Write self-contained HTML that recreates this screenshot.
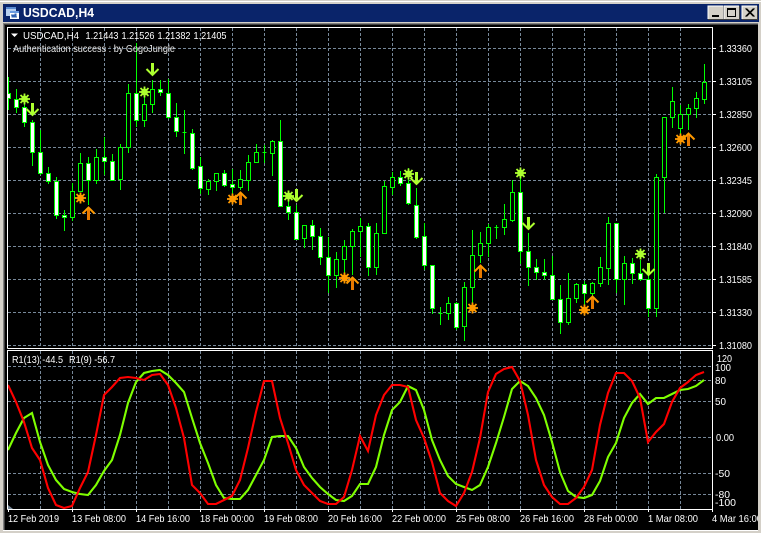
<!DOCTYPE html>
<html>
<head>
<meta charset="utf-8">
<style>
html,body{margin:0;padding:0;background:#d4d0c8;}
svg{display:block;}
text{font-family:"Liberation Sans",sans-serif;font-size:10.5px;fill:#fff;}
</style>
</head>
<body>
<svg width="761" height="533" viewBox="0 0 761 533" xmlns="http://www.w3.org/2000/svg" shape-rendering="crispEdges">
<defs>
<clipPath id="main"><rect x="8" y="28" width="704" height="320"/></clipPath>
<clipPath id="sub"><rect x="8" y="351" width="704" height="158"/></clipPath>
<g id="star" shape-rendering="auto"><path d="M-5.5 0H5.5M0-5.5V5.5M-4-4L4 4M-4 4L4-4" stroke-width="1.8" stroke="currentColor" fill="none"/><circle r="3.4" fill="currentColor"/></g>
<g id="dn" shape-rendering="auto"><path d="M0 0V11" stroke-width="3" stroke="currentColor" fill="none"/><path d="M-6 6L0 12L6 6" stroke-width="2" stroke="currentColor" fill="none"/></g>
<g id="up" shape-rendering="auto"><path d="M0 13V2" stroke-width="3" stroke="#e87a00" fill="none"/><path d="M-6 6.5L0 .5L6 6.5" stroke-width="2" stroke="#ff9900" fill="none"/></g>
</defs>

<!-- window frame -->
<rect width="761" height="533" fill="#d4d0c8"/>
<rect x="0" y="1" width="761" height="1" fill="#ffffff"/>
<rect x="3" y="4" width="756" height="18" fill="#0a246a"/>
<rect x="3" y="22" width="755" height="1" fill="#d4d0c8"/>
<rect x="3" y="23" width="755" height="1" fill="#808080"/>
<rect x="4" y="24" width="754" height="1" fill="#404040"/>
<rect x="3" y="23" width="1" height="508" fill="#808080"/>
<rect x="4" y="24" width="1" height="506" fill="#404040"/>
<rect x="5" y="25" width="753" height="505" fill="#000"/>
<rect x="3" y="530" width="755" height="1" fill="#ffffff"/>

<!-- title icon -->
<g>
<rect x="6" y="7" width="10" height="9" fill="#b8d0f0"/>
<rect x="6" y="7" width="10" height="2" fill="#5a8ad0"/>
<rect x="10" y="11" width="9" height="8" fill="#fff"/>
<rect x="10" y="11" width="9" height="2" fill="#6a9ae0"/>
<path d="M11 15h1v2h1v-2h1v2h1v-3h1v3h1" stroke="#3060b0" fill="none"/>
</g>
<text x="23" y="17" textLength="71" lengthAdjust="spacingAndGlyphs" style="font-size:13px;font-weight:bold">USDCAD,H4</text>

<!-- buttons -->
<g>
<rect x="708" y="6" width="15" height="13" fill="#d4d0c8"/>
<path d="M708 19V6H723" stroke="#fff" fill="none"/>
<path d="M723.5 6V19.5H708" stroke="#404040" fill="none"/>
<rect x="712" y="15" width="7" height="2" fill="#000"/>
<rect x="724" y="6" width="15" height="13" fill="#d4d0c8"/>
<path d="M724 19V6H739" stroke="#fff" fill="none"/>
<path d="M739.5 6V19.5H724" stroke="#404040" fill="none"/>
<rect x="727.5" y="8.5" width="8" height="8" fill="none" stroke="#000"/>
<rect x="727" y="8" width="9" height="2" fill="#000"/>
<rect x="742" y="6" width="15" height="13" fill="#d4d0c8"/>
<path d="M742 19V6H757" stroke="#fff" fill="none"/>
<path d="M757.5 6V19.5H742" stroke="#404040" fill="none"/>
<path d="M745.5 8.5L753.5 16.5M746.5 8.5L754.5 16.5M753.5 8.5L745.5 16.5M754.5 8.5L746.5 16.5" stroke="#000" fill="none" shape-rendering="auto" stroke-width="1"/>
</g>

<!-- grid -->
<path d="M8 48.5H712M8 81.5H712M8 114.5H712M8 147.5H712M8 180.5H712M8 213.5H712M8 246.5H712M8 279.5H712M8 312.5H712M8 345.5H712
M8 366.5H712M8 380.5H712M8 401.5H712M8 437.5H712M8 473.5H712M8 494.5H712" stroke="#778899" stroke-dasharray="3 2" fill="none"/>
<path d="M40.5 28V348M72.5 28V348M104.5 28V348M136.5 28V348M168.5 28V348M200.5 28V348M232.5 28V348M264.5 28V348M296.5 28V348M328.5 28V348M360.5 28V348M392.5 28V348M424.5 28V348M456.5 28V348M488.5 28V348M520.5 28V348M552.5 28V348M584.5 28V348M616.5 28V348M648.5 28V348M680.5 28V348
M40.5 351V509M72.5 351V509M104.5 351V509M136.5 351V509M168.5 351V509M200.5 351V509M232.5 351V509M264.5 351V509M296.5 351V509M328.5 351V509M360.5 351V509M392.5 351V509M424.5 351V509M456.5 351V509M488.5 351V509M520.5 351V509M552.5 351V509M584.5 351V509M616.5 351V509M648.5 351V509M680.5 351V509" stroke="#778899" stroke-dasharray="3 2" fill="none"/>

<!-- candles -->
<g clip-path="url(#main)">
<path stroke="#00ff00" fill="none" d="M8.5 77V110M16.5 89V113M24.5 100V127M32.5 120V166M40.5 130V175M48.5 167V184M56.5 177V219M64.5 210V231M72.5 183V221M80.5 153V192M88.5 157V205M96.5 149V184M104.5 137V175M112.5 154V181M120.5 144V190M128.5 84V153M136.5 43V127M144.5 87V127M152.5 80V113M160.5 80V96M168.5 79V119M176.5 103V137M184.5 110V154M192.5 129V170M200.5 157V194M208.5 179V195M216.5 173V191M224.5 170V187M232.5 169V195M240.5 170V190M248.5 155V191M256.5 144V163M264.5 145V163M272.5 140V176M280.5 120V207M288.5 201V220M296.5 205V240M304.5 225V248M312.5 220V250M320.5 228V265M328.5 237V293M336.5 252V288M344.5 240V275M352.5 229V275M360.5 218V257M368.5 223V276M376.5 223V275M384.5 181V234M392.5 172V195M400.5 171V186M408.5 168V205M416.5 188V239M424.5 223V270M432.5 265V314M440.5 307V325M448.5 297V320M456.5 302V330M464.5 282V341M472.5 230V308M480.5 232V263M488.5 224V257M496.5 225V239M504.5 204V235M512.5 180V222M520.5 178V264M528.5 233V286M536.5 259V280M544.5 259V280M552.5 256V300M560.5 285V334M568.5 273V325M576.5 283V303M584.5 281V315M592.5 282V296M600.5 257V287M608.5 217V285M616.5 223V293M624.5 256V305M632.5 258V284M640.5 260V281M648.5 263V317M656.5 174V317M664.5 117V213M672.5 87V128M680.5 105V135M688.5 104V130M696.5 92V118M704.5 64V104"/>
<path stroke="#00ff00" fill="#fff" d="M6.5 93.5h4V98.5h-4zM14.5 99.5h4V107.5h-4zM22.5 107.5h4V122.5h-4zM30.5 122.5h4V152.5h-4zM38.5 152.5h4V173.5h-4zM46.5 173.5h4V181.5h-4zM54.5 181.5h4V215.5h-4zM62.5 215.5h4V217.5h-4zM86.5 163.5h4V180.5h-4zM102.5 157.5h4V161.5h-4zM110.5 161.5h4V180.5h-4zM134.5 93.5h4V120.5h-4zM158.5 89.5h4V92.5h-4zM166.5 93.5h4V117.5h-4zM174.5 117.5h4V131.5h-4zM182.5 132.5h4M190.5 133.5h4V168.5h-4zM198.5 166.5h4V188.5h-4zM222.5 173.5h4V185.5h-4zM230.5 184.5h4V187.5h-4zM262.5 152.5h4M278.5 141.5h4V206.5h-4zM286.5 206.5h4V212.5h-4zM294.5 212.5h4V239.5h-4zM310.5 225.5h4V236.5h-4zM318.5 236.5h4V257.5h-4zM326.5 257.5h4V275.5h-4zM366.5 226.5h4V267.5h-4zM398.5 177.5h4V183.5h-4zM406.5 183.5h4V203.5h-4zM414.5 205.5h4V237.5h-4zM422.5 236.5h4V265.5h-4zM430.5 265.5h4V308.5h-4zM454.5 303.5h4V327.5h-4zM518.5 192.5h4V251.5h-4zM526.5 251.5h4V267.5h-4zM534.5 267.5h4V272.5h-4zM542.5 272.5h4V275.5h-4zM550.5 275.5h4V299.5h-4zM558.5 299.5h4V322.5h-4zM582.5 284.5h4V293.5h-4zM614.5 223.5h4V279.5h-4zM630.5 263.5h4V273.5h-4zM638.5 273.5h4V279.5h-4zM646.5 279.5h4V308.5h-4z"/>
<path stroke="#00ff00" fill="#000" d="M70.5 191.5h4V217.5h-4zM78.5 163.5h4V191.5h-4zM94.5 157.5h4V180.5h-4zM118.5 147.5h4V179.5h-4zM126.5 93.5h4V147.5h-4zM142.5 104.5h4V120.5h-4zM150.5 89.5h4V104.5h-4zM206.5 181.5h4V189.5h-4zM214.5 173.5h4V181.5h-4zM238.5 179.5h4V187.5h-4zM246.5 162.5h4V180.5h-4zM254.5 152.5h4V162.5h-4zM270.5 141.5h4V153.5h-4zM302.5 225.5h4V238.5h-4zM334.5 259.5h4V275.5h-4zM342.5 246.5h4V259.5h-4zM350.5 231.5h4V246.5h-4zM358.5 226.5h4V231.5h-4zM374.5 233.5h4V267.5h-4zM382.5 186.5h4V233.5h-4zM390.5 177.5h4V187.5h-4zM438.5 313.5h4M446.5 303.5h4V313.5h-4zM462.5 287.5h4V326.5h-4zM470.5 255.5h4V287.5h-4zM478.5 243.5h4V255.5h-4zM486.5 227.5h4V243.5h-4zM494.5 227.5h4M502.5 219.5h4V227.5h-4zM510.5 192.5h4V220.5h-4zM566.5 298.5h4V322.5h-4zM574.5 284.5h4V298.5h-4zM590.5 283.5h4V293.5h-4zM598.5 267.5h4V283.5h-4zM606.5 223.5h4V268.5h-4zM622.5 263.5h4V279.5h-4zM654.5 177.5h4V308.5h-4zM662.5 117.5h4V177.5h-4zM670.5 101.5h4V117.5h-4zM678.5 114.5h4V128.5h-4zM686.5 108.5h4V114.5h-4zM694.5 98.5h4V108.5h-4zM702.5 82.5h4V99.5h-4z"/>

<!-- signals -->
<g color="#adff2f">
<use href="#star" x="24.5" y="99"/>
<use href="#star" x="144.5" y="92"/>
<use href="#star" x="288.5" y="196"/>
<use href="#star" x="408.5" y="174"/>
<use href="#star" x="520.5" y="173"/>
<use href="#star" x="640.5" y="254"/>
<use href="#dn" x="32.5" y="103"/>
<use href="#dn" x="152.5" y="63"/>
<use href="#dn" x="296.5" y="189"/>
<use href="#dn" x="416.5" y="172"/>
<use href="#dn" x="528.5" y="217"/>
<use href="#dn" x="648.5" y="263"/>
</g>
<g color="#ff9900">
<use href="#star" x="80.5" y="198"/>
<use href="#star" x="232.5" y="199"/>
<use href="#star" x="344.5" y="278"/>
<use href="#star" x="472.5" y="308"/>
<use href="#star" x="584.5" y="310"/>
<use href="#star" x="680.5" y="139"/>
<use href="#up" x="88.5" y="207"/>
<use href="#up" x="240.5" y="192"/>
<use href="#up" x="352.5" y="277"/>
<use href="#up" x="480.5" y="265"/>
<use href="#up" x="592.5" y="296"/>
<use href="#up" x="688.5" y="133"/>
</g>
</g>

<!-- oscillator -->
<g clip-path="url(#sub)" shape-rendering="auto" fill="none" stroke-width="2.1">
<polyline stroke="#7fff00" points="8,450 16,433 24,418 32,413 40,442 48,465 56,480 64,489 72,492 80,494 88,495 96,485 104,471 112,460 120,435 128,403 136,382 144,373 152,371 160,370 168,375 176,383 184,392 192,418 200,443 208,463 216,485 224,498 232,499 240,499 248,490 256,475 264,460 272,437 280,436 288,436 296,448 304,467 312,478 320,487 328,494 336,500 344,501 352,496 360,484 368,484 376,467 384,435 392,410 400,402 408,386 416,390 424,410 432,440 440,460 448,476 456,484 464,487 472,490 480,485 488,467 496,443 504,417 512,389 520,381 528,386 536,398 544,415 552,442 560,472 568,491 576,497 584,498 592,495 600,481 608,457 616,443 624,418 632,403 640,394 648,404 656,398 664,398 672,394 680,390 688,389 696,386 704,380"/>
<polyline stroke="#ff0000" points="8,385 16,402 24,422 32,448 40,460 48,488 56,505 64,508 72,506 80,488 88,472 96,435 104,395 112,387 120,378 128,377 136,378 144,380 152,375 160,374 168,385 176,408 184,438 192,485 200,493 208,504 216,504 224,500 232,496 240,480 248,448 256,412 264,381 272,381 280,418 288,443 296,470 304,485 312,493 320,501 328,504 336,504 344,497 352,470 360,436 368,451 376,415 384,395 392,385 400,385 408,387 416,420 424,438 432,462 440,493 448,501 456,506 464,493 472,472 480,438 488,392 496,374 504,369 512,367 520,381 528,415 536,460 544,485 552,497 560,504 568,504 576,498 584,487 592,470 600,425 608,393 616,373 624,373 632,381 640,398 648,442 656,432 664,424 672,402 680,388 688,382 696,375 704,372"/>
</g>

<!-- pane borders -->
<path d="M7.5 348.5V27.5H712.5V348.5H7.5M7.5 509.5V350.5H712.5V509.5H7.5" stroke="#fff" fill="none"/>
<path d="M8 505L13 509H8z" fill="#778899" shape-rendering="auto"/>

<!-- ticks -->
<path stroke="#fff" fill="none" d="M8.5 510V512M72.5 510V512M136.5 510V512M200.5 510V512M264.5 510V512M328.5 510V512M392.5 510V512M456.5 510V512M520.5 510V512M584.5 510V512M648.5 510V512M712.5 510V512
M713 48.5H716M713 81.5H716M713 114.5H716M713 147.5H716M713 180.5H716M713 213.5H716M713 246.5H716M713 279.5H716M713 312.5H716M713 345.5H716"/>

<!-- chart header -->
<path d="M11 33.5H18L14.5 37z" fill="#fff" shape-rendering="auto"/>
<text x="23" y="39" textLength="56" lengthAdjust="spacingAndGlyphs">USDCAD,H4</text>
<text x="85.5" y="39" textLength="33" lengthAdjust="spacingAndGlyphs">1.21443</text>
<text x="121.5" y="39" textLength="33" lengthAdjust="spacingAndGlyphs">1.21526</text>
<text x="157.5" y="39" textLength="33" lengthAdjust="spacingAndGlyphs">1.21382</text>
<text x="193.5" y="39" textLength="33" lengthAdjust="spacingAndGlyphs">1.21405</text>
<text x="13" y="52" textLength="162" lengthAdjust="spacingAndGlyphs" style="fill:#e8e8e8">Authentication success : by GogoJungle</text>
<text x="12" y="363" textLength="51" lengthAdjust="spacingAndGlyphs">R1(13) -44.5</text>
<text x="69" y="363" textLength="46" lengthAdjust="spacingAndGlyphs">R1(9) -56.7</text>

<!-- price axis -->
<g>
<text x="719" y="52" textLength="33" lengthAdjust="spacingAndGlyphs">1.33360</text>
<text x="719" y="85" textLength="33" lengthAdjust="spacingAndGlyphs">1.33105</text>
<text x="719" y="118" textLength="33" lengthAdjust="spacingAndGlyphs">1.32850</text>
<text x="719" y="151" textLength="33" lengthAdjust="spacingAndGlyphs">1.32600</text>
<text x="719" y="184" textLength="33" lengthAdjust="spacingAndGlyphs">1.32345</text>
<text x="719" y="217" textLength="33" lengthAdjust="spacingAndGlyphs">1.32090</text>
<text x="719" y="250" textLength="33" lengthAdjust="spacingAndGlyphs">1.31840</text>
<text x="719" y="283" textLength="33" lengthAdjust="spacingAndGlyphs">1.31585</text>
<text x="719" y="316" textLength="33" lengthAdjust="spacingAndGlyphs">1.31330</text>
<text x="719" y="349" textLength="33" lengthAdjust="spacingAndGlyphs">1.31080</text>
<text x="717" y="362" textLength="15" lengthAdjust="spacingAndGlyphs">120</text>
<text x="715" y="371" textLength="16" lengthAdjust="spacingAndGlyphs">100</text>
<text x="715" y="384" textLength="11" lengthAdjust="spacingAndGlyphs">80</text>
<text x="715" y="405" textLength="11" lengthAdjust="spacingAndGlyphs">50</text>
<text x="716" y="441" textLength="18" lengthAdjust="spacingAndGlyphs">0.00</text>
<text x="715" y="477" textLength="15" lengthAdjust="spacingAndGlyphs">-50</text>
<text x="715" y="498" textLength="15" lengthAdjust="spacingAndGlyphs">-80</text>
<text x="715" y="506" textLength="21" lengthAdjust="spacingAndGlyphs">-100</text>
</g>

<!-- time axis -->
<g>
<text x="8" y="522" textLength="51" lengthAdjust="spacingAndGlyphs">12 Feb 2019</text>
<text x="72" y="522" textLength="54" lengthAdjust="spacingAndGlyphs">13 Feb 08:00</text>
<text x="136" y="522" textLength="54" lengthAdjust="spacingAndGlyphs">14 Feb 16:00</text>
<text x="200" y="522" textLength="54" lengthAdjust="spacingAndGlyphs">18 Feb 00:00</text>
<text x="264" y="522" textLength="54" lengthAdjust="spacingAndGlyphs">19 Feb 08:00</text>
<text x="328" y="522" textLength="54" lengthAdjust="spacingAndGlyphs">20 Feb 16:00</text>
<text x="392" y="522" textLength="54" lengthAdjust="spacingAndGlyphs">22 Feb 00:00</text>
<text x="456" y="522" textLength="54" lengthAdjust="spacingAndGlyphs">25 Feb 08:00</text>
<text x="520" y="522" textLength="54" lengthAdjust="spacingAndGlyphs">26 Feb 16:00</text>
<text x="584" y="522" textLength="54" lengthAdjust="spacingAndGlyphs">28 Feb 00:00</text>
<text x="648" y="522" textLength="50" lengthAdjust="spacingAndGlyphs">1 Mar 08:00</text>
<text x="712" y="522" textLength="50" lengthAdjust="spacingAndGlyphs">4 Mar 16:00</text>
</g>
<rect x="758" y="23" width="3" height="510" fill="#d4d0c8"/>
</svg>
</body>
</html>
